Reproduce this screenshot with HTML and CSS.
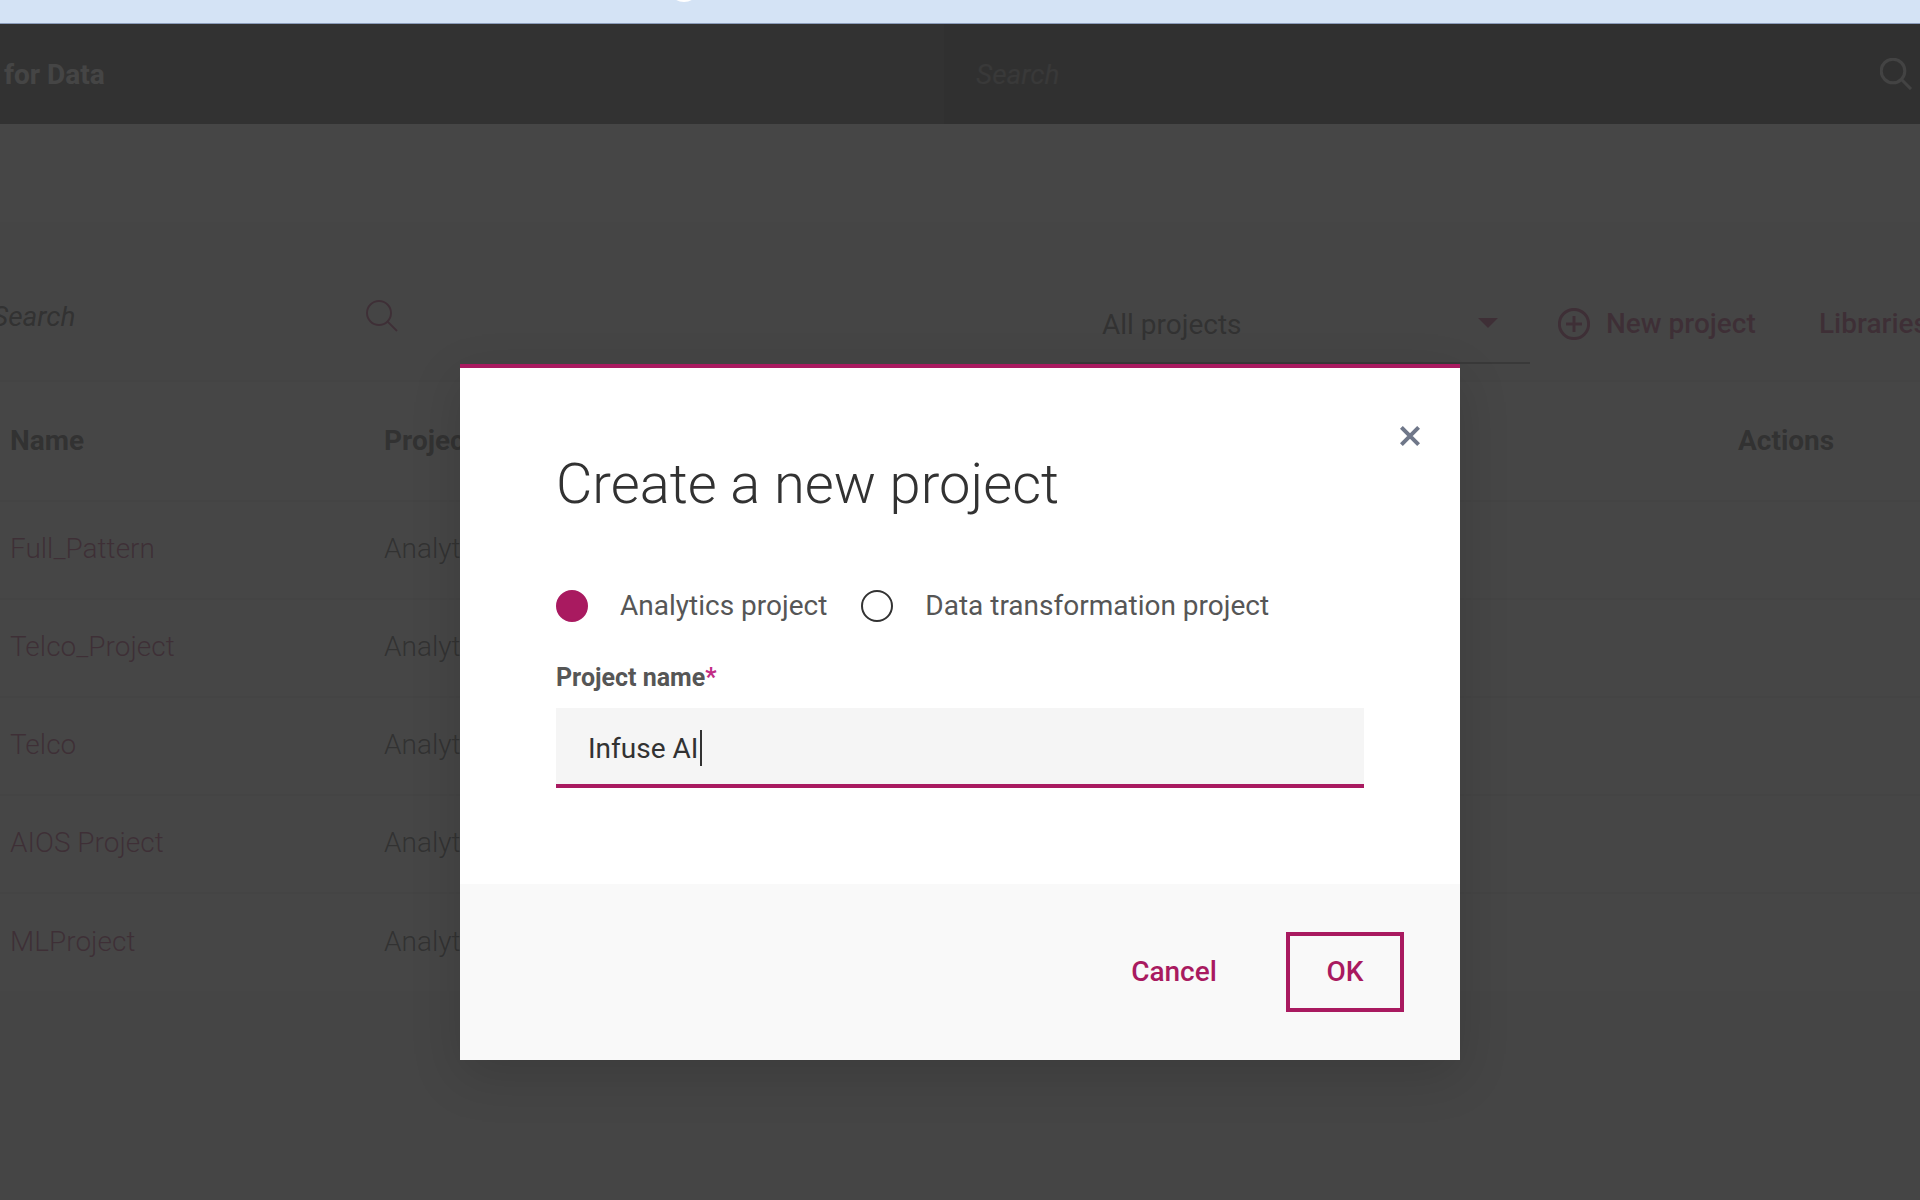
FILE: index.html
```html
<!DOCTYPE html>
<html lang="en">
<head>
<meta charset="utf-8">
<meta name="viewport" content="width=device-width, initial-scale=1">
<title>Projects</title>
<link rel="stylesheet" href="styles.css">
</head>
<body>
<div class="tabstrip"><span class="tabstrip-dot"></span></div>
<div class="app">
  <header class="topbar">
    <div class="brand">for Data</div>
    <div class="topsearch">
      <input class="search-input search-input-top" type="search" placeholder="Search" aria-label="Search all">
      <svg class="icon icon-light" viewBox="0 0 32 32"><circle cx="13" cy="13" r="11.8"/><path d="M21.5 21.5 31 31"/></svg>
    </div>
  </header>
  <div class="titlebar"></div>
  <main>
    <div class="toolbar">
      <div class="filter">
        <input class="search-input" type="search" placeholder="Search" aria-label="Search projects">
        <svg class="icon" viewBox="0 0 32 32"><circle cx="13" cy="13" r="12"/><path d="M21.5 21.5 31 31"/></svg>
      </div>
      <div class="actions">
        <div class="select">
          <select aria-label="Project filter"><option>All projects</option></select>
          <svg class="select-arrow" viewBox="0 0 20 10"><path d="M0 0h20L10 10z"/></svg>
        </div>
        <button class="link-button" type="button">
          <svg class="icon icon-add" viewBox="0 0 32 32"><circle cx="16" cy="16" r="14.6"/><path d="M16 8v16M8 16h16"/></svg>
          New project
        </button>
        <a class="libraries" href="#">Libraries</a>
      </div>
    </div>
    <table class="projects">
      <thead><tr><th class="col-name">Name</th><th>Project type</th><th class="col-actions">Actions</th></tr></thead>
      <tbody>
        <tr><td><a href="#">Full_Pattern</a></td><td>Analytics project</td><td></td></tr>
        <tr><td><a href="#">Telco_Project</a></td><td>Analytics project</td><td></td></tr>
        <tr><td><a href="#">Telco</a></td><td>Analytics project</td><td></td></tr>
        <tr><td><a href="#">AIOS Project</a></td><td>Analytics project</td><td></td></tr>
        <tr><td><a href="#">MLProject</a></td><td>Analytics project</td><td></td></tr>
      </tbody>
    </table>
  </main>
  <div class="overlay">
    <form class="modal" role="dialog" aria-labelledby="modal-title">
      <div class="modal-body">
        <button class="close" type="button" aria-label="Close"><svg viewBox="0 0 20 20"><path d="M1.4 1.4l17.2 17.2M18.6 1.4 1.4 18.6"/></svg></button>
        <h1 id="modal-title">Create a new project</h1>
        <div class="radios">
          <label><input type="radio" name="kind" checked>Analytics project</label>
          <label><input type="radio" name="kind">Data transformation project</label>
        </div>
        <label class="field-label" for="project-name">Project name<span class="required">*</span></label>
        <div class="field">
          <input id="project-name" type="text" value="Infuse AI">
          <span class="caret"></span>
        </div>
      </div>
      <div class="modal-footer">
        <button class="cancel" type="button">Cancel</button>
        <button class="ok" type="submit">OK</button>
      </div>
    </form>
  </div>
</div>
</body>
</html>
```

FILE: styles.css
```css
:root {
  --brand: #a91a60;
  --ink: #323232;
  --line: #e6e6e6;
}

* { box-sizing: border-box; }

body {
  margin: 0;
  overflow: hidden;
  color: var(--ink);
  font: 400 28px/36px Roboto, "Liberation Sans", sans-serif;
}

input, select, button { font: inherit; color: inherit; border: 0; padding: 0; margin: 0; background: none; border-radius: 0; outline: 0; }
a { color: var(--brand); text-decoration: none; }

/* Browser tab strip */
.tabstrip { position: relative; height: 24px; overflow: hidden; background: #d4e3f5; border-bottom: 1px solid #8c9dbb; }
.tabstrip-dot { position: absolute; left: 668px; bottom: 21px; width: 32px; height: 32px; border-radius: 50%; background: #fff; }

.app { position: relative; min-height: calc(100vh - 24px); background: #f4f4f4; }

/* Header */
.topbar { display: grid; grid-template-columns: 59fr 61fr; height: 100px; background: var(--ink); }
.brand { padding: 33px 4px 31px; font-weight: 700; color: #f4f4f4; }
.topsearch { display: flex; align-items: center; padding: 0 8px 0 32px; background: #262626; }
.search-input { flex: 1; min-width: 0; height: 36px; padding-top: 2px; font-style: italic; }
.search-input::placeholder { color: var(--ink); opacity: 1; }
.search-input-top::placeholder { color: #777; }
.icon { flex: none; width: 32px; height: 32px; fill: none; stroke: var(--brand); stroke-width: 2; }
.icon-light { stroke: #dfdfdf; stroke-width: 3; }

.titlebar { height: 98px; background: #fff; }

/* Toolbar */
.toolbar { display: flex; justify-content: space-between; height: 158px; padding-top: 62px; }
.filter { display: flex; align-items: center; width: 406px; height: 64px; margin-left: -8px; }
.actions { display: flex; align-items: center; height: 80px; }
.select { display: flex; align-items: center; width: 460px; height: 80px; padding: 0 32px; border-bottom: 2px solid #777; }
.select select { flex: 1; padding-top: 4px; appearance: none; }
.select-arrow { width: 20px; height: 10px; fill: var(--brand); }
.link-button { display: flex; align-items: center; gap: 16px; width: 204px; margin-left: 28px; font-weight: 500; color: var(--brand); white-space: nowrap; }
.icon-add { stroke-width: 3; }
.libraries { width: 101px; margin-left: 57px; font-weight: 500; white-space: nowrap; overflow: hidden; }

/* Table */
.projects { width: 100%; table-layout: fixed; border-collapse: collapse; background: #fff; font-weight: 300; text-align: left; }
.projects th { height: 120px; padding: 0 10px; border-top: 2px solid var(--line); font-weight: 700; }
.projects td { height: 98px; padding: 0 10px 2px; border-top: 2px solid var(--line); }
.projects .col-name { width: 374px; }
.projects .col-actions { width: 192px; }

/* Dialog */
.overlay { position: absolute; inset: 0; padding: 340px 24px 0; background: rgba(50, 50, 50, 0.9); }
.modal { position: relative; max-width: 1000px; margin: 0 auto; background: #fff; border-top: 4px solid var(--brand); box-shadow: 0 16px 48px rgba(0, 0, 0, 0.14); }
.modal-body { padding: 80px 96px 96px; }
.close { position: absolute; top: 48px; right: 30px; width: 40px; height: 40px; display: grid; place-items: center; }
.close svg { width: 20px; height: 20px; fill: none; stroke: #6f7789; stroke-width: 4; }
h1 { margin: 0; font-size: 56px; line-height: 72px; font-weight: 300; }
.radios { display: flex; gap: 34px; margin-top: 68px; }
.radios label { display: flex; align-items: center; gap: 32px; color: #565656; white-space: nowrap; }
.radios input { appearance: none; width: 32px; height: 32px; border: 2px solid var(--ink); border-radius: 50%; }
.radios input:checked { border-color: var(--brand); background: var(--brand); }
.field-label { display: block; margin-top: 38px; font-size: 25px; line-height: 32px; font-weight: 700; color: #565656; }
.required { color: #c22d84; }
.field { position: relative; height: 80px; margin-top: 14px; background: #f5f5f5; border-bottom: 4px solid var(--brand); }
.field input { width: 100%; height: 100%; padding: 4px 32px 0; }
.caret { position: absolute; left: 144px; top: 22px; width: 2px; height: 36px; background: var(--ink); }
.modal-footer { display: flex; justify-content: flex-end; gap: 52px; padding: 48px 56px; background: #f9f9f9; }
.modal-footer button { height: 80px; font-weight: 500; color: var(--brand); }
.cancel { width: 120px; }
.modal-footer .ok { width: 118px; border: 4px solid var(--brand); }
```
